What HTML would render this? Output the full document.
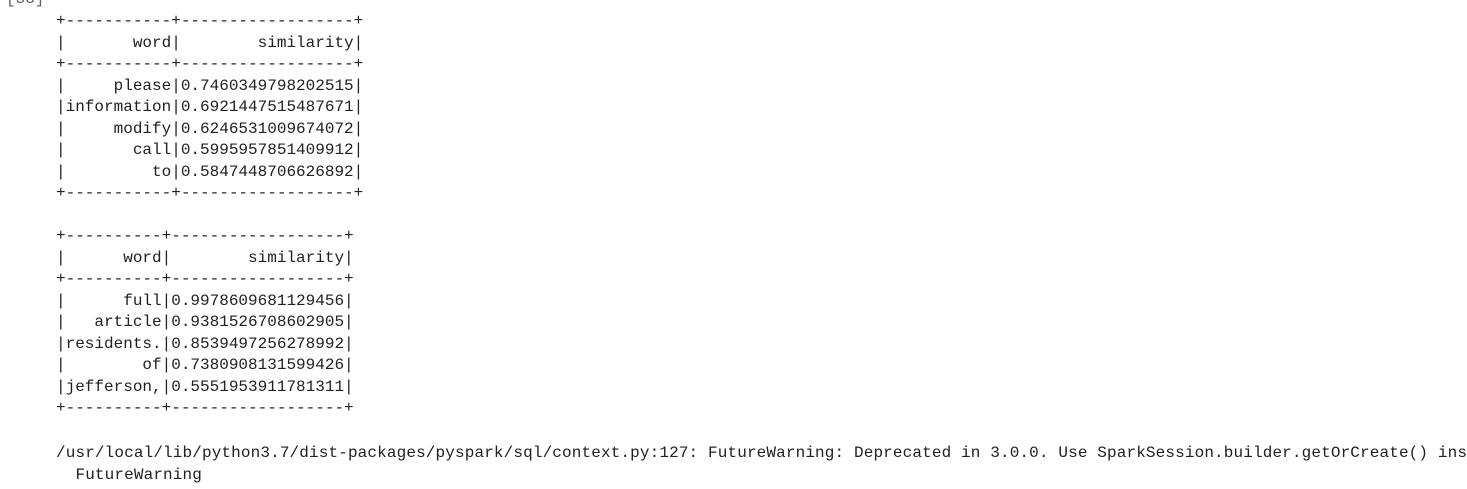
<!DOCTYPE html>
<html><head><style>
html,body{margin:0;padding:0;background:#fff;width:1467px;height:489px;overflow:hidden;}
pre{position:absolute;margin:0;font-family:"Liberation Mono",monospace;font-size:16px;line-height:21.5px;color:#212121;white-space:pre;}
</style></head><body>
<pre style="left:6px;top:-11px;color:#616161">[53]</pre>
<pre style="left:56px;top:11px;">+-----------+------------------+
|       word|        similarity|
+-----------+------------------+
|     please|0.7460349798202515|
|information|0.6921447515487671|
|     modify|0.6246531009674072|
|       call|0.5995957851409912|
|         to|0.5847448706626892|
+-----------+------------------+

+----------+------------------+
|      word|        similarity|
+----------+------------------+
|      full|0.9978609681129456|
|   article|0.9381526708602905|
|residents.|0.8539497256278992|
|        of|0.7380908131599426|
|jefferson,|0.5551953911781311|
+----------+------------------+
</pre>
<pre style="left:56px;top:443px;letter-spacing:0.13px;">/usr/local/lib/python3.7/dist-packages/pyspark/sql/context.py:127: FutureWarning: Deprecated in 3.0.0. Use SparkSession.builder.getOrCreate() instead.
  FutureWarning</pre>
</body></html>
